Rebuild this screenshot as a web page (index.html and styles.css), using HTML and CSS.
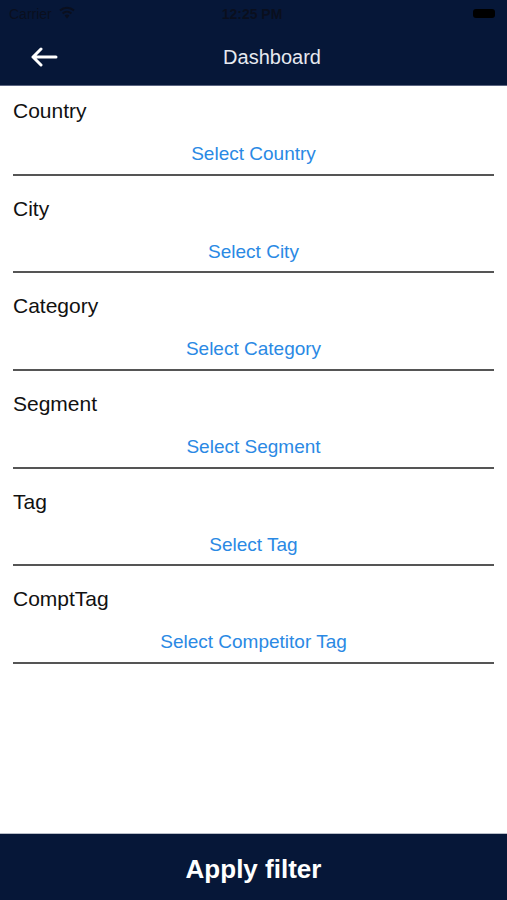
FILE: index.html
```html
<!DOCTYPE html>
<html lang="en">
<head>
  <meta charset="utf-8">
  <title>Dashboard</title>
  <link rel="stylesheet" href="styles.css">
</head>
<body>
<div class="screen">
  <header class="topbar">
    <div class="status">
      <span class="carrier">Carrier
        <svg class="wifi" width="18" height="13" viewBox="0 0 18 13">
          <path d="M9 12.5 L6.6 9.6 A3.6 3.6 0 0 1 11.4 9.6 Z" fill="currentColor"/>
          <path d="M4.6 7.4 A6.6 6.6 0 0 1 13.4 7.4" fill="none" stroke="currentColor" stroke-width="2"/>
          <path d="M2 4.6 A10.2 10.2 0 0 1 16 4.6" fill="none" stroke="currentColor" stroke-width="2"/>
        </svg>
      </span>
      <span class="clock">12:25 PM</span>
      <span class="battery"></span>
    </div>
    <div class="nav">
      <svg class="back" width="28" height="20" viewBox="0 0 28 20">
        <path d="M26 10 H3 M11 2 L3 10 L11 18" fill="none" stroke="#fff" stroke-width="3" stroke-linecap="round" stroke-linejoin="round"/>
      </svg>
      <h1>Dashboard</h1>
    </div>
  </header>

  <main class="filters">
    <div class="field">
      <label>Country</label>
      <div class="pick">Select Country</div>
    </div>
    <div class="field">
      <label>City</label>
      <div class="pick">Select City</div>
    </div>
    <div class="field">
      <label>Category</label>
      <div class="pick">Select Category</div>
    </div>
    <div class="field">
      <label>Segment</label>
      <div class="pick">Select Segment</div>
    </div>
    <div class="field">
      <label>Tag</label>
      <div class="pick">Select Tag</div>
    </div>
    <div class="field">
      <label>ComptTag</label>
      <div class="pick">Select Competitor Tag</div>
    </div>
  </main>

  <button class="apply">Apply filter</button>
</div>
</body>
</html>
```

FILE: styles.css
```css
html, body {
  margin: 0;
  height: 100%;
}
body {
  font-family: "Liberation Sans", Arial, sans-serif;
  background: #fff;
}
.screen {
  height: 900px;
  display: flex;
  flex-direction: column;
}

.topbar {
  background: #061738;
  height: 86px;
  border-bottom: 1px solid #5a6480;
  box-sizing: border-box;
}
.status {
  height: 28px;
  display: flex;
  align-items: center;
  justify-content: space-between;
  padding: 0 12px 0 9px;
  color: #0a0f1e;
  font-size: 14px;
}
.carrier { display: flex; align-items: center; gap: 6px; width: 120px; }
.wifi { color: #0a0f1e; margin-top: -3px; }
.clock { font-weight: bold; font-size: 14px; }
.battery {
  width: 22px;
  height: 9px;
  background: #000;
  border-radius: 3px;
  margin-left: 98px;
  margin-top: -2px;
}
.nav {
  height: 57px;
  display: flex;
  align-items: center;
  padding: 0 21px 0 30px;
}
.back { margin-top: 0; flex: none; }
.nav h1 {
  flex: 1;
  margin: 2px 0 0;
  text-align: center;
  font-size: 20px;
  font-weight: normal;
  color: #e6e9f0;
}

.filters {
  flex: 1;
  padding: 0 13px;
}
.field {
  height: 97.7px;
  box-sizing: border-box;
  padding-top: 22px;
  border-bottom: 2px solid #555;
}
.field:first-child {
  height: 89.7px;
  padding-top: 14px;
}
.field label {
  display: block;
  font-size: 21px;
  line-height: 22px;
  color: #111;
}
.pick {
  margin-top: 21px;
  text-align: center;
  font-size: 19px;
  line-height: 22px;
  color: #2a89e4;
}

.apply {
  height: 67px;
  border: none;
  border-top: 1px solid #b9bec8;
  background: #061738;
  color: #fff;
  font-family: "Liberation Sans", Arial, sans-serif;
  font-size: 26px;
  font-weight: bold;
  padding: 4px 0 0;
}
```
